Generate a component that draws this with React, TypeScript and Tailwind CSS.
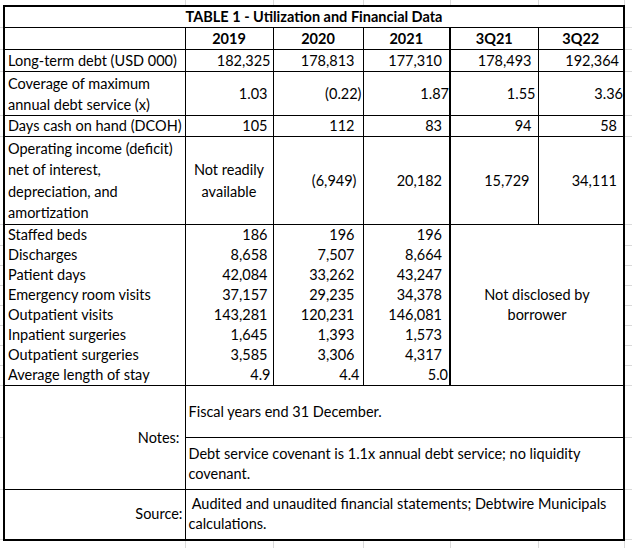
const grid = 'border-[#dadada]';

const lower: [string, string, string, string][] = [
  ['Staffed beds', '186', '196', '196'],
  ['Discharges', '8,658', '7,507', '8,664'],
  ['Patient days', '42,084', '33,262', '43,247'],
  ['Emergency room visits', '37,157', '29,235', '34,378'],
  ['Outpatient visits', '143,281', '120,231', '146,081'],
  ['Inpatient surgeries', '1,645', '1,393', '1,573'],
  ['Outpatient surgeries', '3,585', '3,306', '4,317'],
];

function Gap() {
  return <td className="border-b border-[#dadada]" />;
}

export default function App() {
  return (
    <div className="w-[632px] h-[548px] overflow-hidden bg-white text-black font-['Lato',sans-serif] text-[14.5px] leading-[20px]">
      <table className="table-fixed border-collapse w-[632px]">
        <colgroup>
          <col className="w-[4px]" />
          <col className="w-[181px]" />
          <col className="w-[88px]" />
          <col className="w-[90px]" />
          <col className="w-[87px]" />
          <col className="w-[88px]" />
          <col className="w-[86px]" />
          <col className="w-[8px]" />
        </colgroup>
        <tbody>
          {/* sheet gridlines above the table */}
          <tr className="h-[6px]">
            <td />
            <td className={`border-r ${grid}`} />
            <td className={`border-r ${grid}`} />
            <td className={`border-r ${grid}`} />
            <td className={`border-r ${grid}`} />
            <td className={`border-r ${grid}`} />
            <td className={`border-r ${grid}`} />
            <td />
          </tr>

          <tr className="h-[21px]">
            <Gap />
            <td colSpan={6} className="border-2 border-b border-black text-center font-bold">
              TABLE 1 - Utilization and Financial Data
            </td>
            <Gap />
          </tr>

          <tr className="h-[22px] font-bold text-center">
            <Gap />
            <td className="border-l-2 border-r border-b border-black" />
            <td className="border-r border-b border-black">2019</td>
            <td className="border-r border-b border-black">2020</td>
            <td className="border-r-2 border-b border-black">2021</td>
            <td className="border-r border-b border-black">3Q21</td>
            <td className="border-r-2 border-b border-black">3Q22</td>
            <Gap />
          </tr>

          <tr className="h-[22px] text-right">
            <Gap />
            <td className="border-l-2 border-r border-b border-black text-left pl-[3px]">Long-term debt (USD 000)</td>
            <td className="border-r border-b border-black pr-[2px]">182,325</td>
            <td className="border-r border-b border-black pr-[8px]">178,813</td>
            <td className="border-r-2 border-b border-black pr-[7px]">177,310</td>
            <td className="border-r border-b border-black pr-[6px]">178,493</td>
            <td className="border-r-2 border-b border-black pr-[4px]">192,364</td>
            <Gap />
          </tr>

          <tr className="h-[44px] text-right">
            <Gap />
            <td className="border-l-2 border-r border-b border-black text-left pl-[3px] leading-[21px]">
              Coverage of maximum
              <br />
              annual debt service (x)
            </td>
            <td className="border-r border-b border-black pr-[5px]">1.03</td>
            <td className="border-r border-b border-black pr-[1px]">(0.22)</td>
            <td className="border-r-2 border-b border-black pr-0">1.87</td>
            <td className="border-r border-b border-black pr-[2px]">1.55</td>
            <td className="border-r-2 border-b border-black pr-0">3.36</td>
            <Gap />
          </tr>

          <tr className="h-[20px] text-right">
            <Gap />
            <td className="border-l-2 border-r border-b border-black text-left pl-[3px]">Days cash on hand (DCOH)</td>
            <td className="border-r border-b border-black pr-[5px]">105</td>
            <td className="border-r border-b border-black pr-[8px]">112</td>
            <td className="border-r-2 border-b border-black pr-[7px]">83</td>
            <td className="border-r border-b border-black pr-[6px]">94</td>
            <td className="border-r-2 border-b border-black pr-[6px]">58</td>
            <Gap />
          </tr>

          <tr className="h-[88px] text-right">
            <Gap />
            <td className="border-l-2 border-r border-b border-black text-left pl-[3px] leading-[21.5px]">
              Operating income (deficit)
              <br />
              net of interest,
              <br />
              depreciation, and
              <br />
              amortization
            </td>
            <td className="border-r border-b border-black text-center leading-[22px]">
              Not readily
              <br />
              available
            </td>
            <td className="border-r border-b border-black pr-[6px]">(6,949)</td>
            <td className="border-r-2 border-b border-black pr-[7px]">20,182</td>
            <td className="border-r border-b border-black pr-[8px]">15,729</td>
            <td className="border-r-2 border-b border-black pr-[6px]">34,111</td>
            <Gap />
          </tr>

          {lower.map(([label, a, b, c], i) => (
            <tr key={label} className="h-[20px] text-right">
              <Gap />
              <td className="border-l-2 border-r border-black text-left pl-[3px]">{label}</td>
              <td className="border-r border-black pr-[5px]">{a}</td>
              <td className="border-r border-black pr-[8px]">{b}</td>
              <td className="border-r-2 border-black pr-[7px]">{c}</td>
              {i === 0 && (
                <td colSpan={2} rowSpan={8} className="border-r-2 border-b border-black text-center">
                  Not disclosed by
                  <br />
                  borrower
                </td>
              )}
              <Gap />
            </tr>
          ))}

          <tr className="h-[20px] text-right">
            <Gap />
            <td className="border-l-2 border-r border-b border-black text-left pl-[3px]">Average length of stay</td>
            <td className="border-r border-b border-black pr-[2px]">4.9</td>
            <td className="border-r border-b border-black pr-[3px]">4.4</td>
            <td className="border-r-2 border-b border-black pr-[1px]">5.0</td>
            <Gap />
          </tr>

          <tr className="h-[52px]">
            <Gap />
            <td rowSpan={2} className="border-l-2 border-r border-b border-black text-right pr-[5px]">
              Notes:
            </td>
            <td colSpan={5} className="border-r-2 border-b border-black pl-[3px]">
              Fiscal years end 31 December.
            </td>
            <Gap />
          </tr>

          <tr className="h-[52px]">
            <Gap />
            <td colSpan={5} className="border-r-2 border-b border-black pl-[3px]">
              Debt service covenant is 1.1x annual debt service; no liquidity
              <br />
              covenant.
            </td>
            <Gap />
          </tr>

          <tr className="h-[50px]">
            <Gap />
            <td className="border-l-2 border-r border-b-2 border-black text-right pr-[2px]">Source:</td>
            <td colSpan={5} className="border-r-2 border-b-2 border-black pl-[3px]">
              {'\u00a0'}Audited and unaudited financial statements; Debtwire Municipals
              <br />
              calculations.
            </td>
            <Gap />
          </tr>

          {/* sheet gridlines below the table */}
          <tr className="h-[9px]">
            <td />
            <td className={`border-r ${grid}`} />
            <td className={`border-r ${grid}`} />
            <td className={`border-r ${grid}`} />
            <td className={`border-r ${grid}`} />
            <td className={`border-r ${grid}`} />
            <td className={`border-r ${grid}`} />
            <td />
          </tr>
        </tbody>
      </table>
    </div>
  );
}
